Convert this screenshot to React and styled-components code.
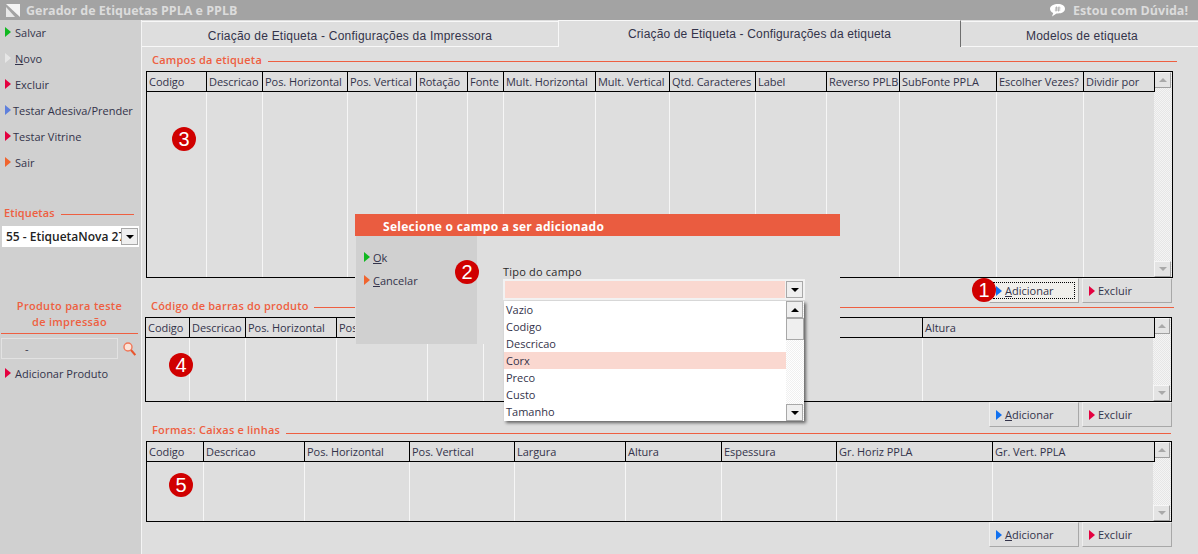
import React from 'react';
import styled, { createGlobalStyle } from 'styled-components';

const FONT = '"Open Sans", "Noto Sans", "Liberation Sans", sans-serif';
const ORANGE = '#ee5f41';
const TEXT = '#33334a';

const GlobalStyle = createGlobalStyle`
  html, body { margin: 0; padding: 0; background: #dedede; }
  body { font-family: ${FONT}; font-size: 11px; color: ${TEXT}; overflow: hidden; }
  * { box-sizing: border-box; }
`;

const ARROWS = {
  green: '#10b820',
  white: '#e6e6e6',
  red: '#e4003f',
  blue: '#5f80dc',
  brightBlue: '#1070f0',
  orange: '#f0642e',
};

const Window = styled.div`
  width: 1198px;
  height: 554px;
  display: flex;
  flex-direction: column;
  position: relative;
  overflow: hidden;
  background: #dedede;
`;

const TitleBar = styled.header`
  height: 20px;
  flex: none;
  display: flex;
  align-items: center;
  padding: 0 10px 0 6px;
  background: #a3a3a3;
  color: #dcdcdc;
  font-weight: 700;
  font-size: 12.5px;
`;

const AppTitle = styled.span`
  margin-left: 6px;
`;

const HelpLink = styled.span`
  margin-left: auto;
  display: flex;
  align-items: center;
  gap: 8px;
`;

const Body = styled.div`
  flex: 1;
  display: flex;
  min-height: 0;
`;

const Sidebar = styled.aside`
  width: 141px;
  flex: none;
  display: flex;
  flex-direction: column;
  padding: 0 0 0 1px;
  background: #d0d0d0;
`;

const Menu = styled.nav`
  display: flex;
  flex-direction: column;
  padding: ${(p) => p.$top ?? 0}px 0 0 4px;
`;

const MenuItem = styled.div`
  height: 26px;
  padding-bottom: 2px;
  display: flex;
  align-items: center;
  gap: ${(p) => p.$gap ?? 4}px;
  white-space: nowrap;
`;

const Arrow = styled.i`
  display: block;
  flex: none;
  width: 0;
  height: 0;
  border-style: solid;
  border-width: 5.5px 0 5.5px 6px;
  border-color: transparent transparent transparent ${(p) => ARROWS[p.$color]};
`;

const Underlined = styled.u`
  text-underline-offset: 1px;
`;

const SideHeading = styled.div`
  margin: 29px 0 0 3px;
  display: flex;
  align-items: center;
  gap: 6px;
  height: 14px;
  color: ${ORANGE};
  font-weight: 600;
  letter-spacing: 0.1px;
  &::after {
    content: '';
    width: 73px;
    height: 1px;
    margin-top: 5px;
    background: ${ORANGE};
  }
`;

const LabelSelect = styled.div`
  margin: 7px 0 0 1px;
  width: 137px;
  height: 21px;
  padding: 2px 1px 2px 4px;
  display: flex;
  align-items: center;
  background: #fff;
  font-size: 12px;
  font-weight: 600;
  color: #222;
  white-space: nowrap;
  overflow: hidden;
`;

const Clip = styled.span`
  flex: 1;
  overflow: hidden;
`;

const DropButton = styled.span`
  width: ${(p) => p.$w ?? 17}px;
  height: ${(p) => p.$h ?? 17}px;
  flex: none;
  display: flex;
  align-items: center;
  justify-content: center;
  background: #efefef;
  border: 1px solid #a8a8a8;
  &::after {
    content: '';
    border-style: solid;
    border-width: ${(p) => (p.$up ? '0 4px 4px' : '4px 4px 0')};
    border-color: ${(p) =>
      p.$up
        ? `transparent transparent ${p.$muted ? '#a9a9a9' : '#000'}`
        : `${p.$muted ? '#a9a9a9' : '#000'} transparent transparent`};
  }
`;

const ProductHeading = styled.div`
  margin: 51px 3px 0 0;
  padding-bottom: 2px;
  height: 36px;
  border-bottom: 1px solid ${ORANGE};
  color: ${ORANGE};
  font-weight: 600;
  letter-spacing: 0.3px;
  line-height: 16px;
  text-align: center;
`;

const ProductRow = styled.div`
  margin-top: 4px;
  display: flex;
  align-items: center;
  gap: 5px;
`;

const ProductInput = styled.div`
  width: 117px;
  height: 21px;
  padding-left: 23px;
  display: flex;
  align-items: center;
  border: 1px solid #e2e2e2;
`;

const Main = styled.main`
  flex: 1;
  min-width: 0;
  display: flex;
  flex-direction: column;
  border-left: 1px solid #f4f4f4;
`;

const Tabs = styled.div`
  height: 27px;
  flex: none;
  display: flex;
`;

const Tab = styled.div`
  width: ${(p) => p.$w}px;
  flex: ${(p) => (p.$grow ? 1 : 'none')};
  display: flex;
  align-items: center;
  justify-content: center;
  padding: ${(p) => (p.$active ? 0 : 3)}px 0 0 ${(p) => (p.$grow ? 5 : 0)}px;
  font-family: "Liberation Sans", Arial, sans-serif;
  font-size: 12px;
  letter-spacing: ${(p) => p.$spacing}px;
  background: #dedede;
  border-top: 1px solid #f8f8f8;
  margin-top: ${(p) => (p.$active ? 0 : 1)}px;
  border-bottom: ${(p) => (p.$active ? 'none' : '1px solid #f8f8f8')};
  border-right: ${(p) => (p.$active ? '1px solid #6e6e6e' : 'none')};
  border-left: ${(p) => (p.$active ? '1px solid #f8f8f8' : 'none')};
`;

const Heading = styled.div`
  height: ${(p) => p.$h}px;
  flex: none;
  padding: 0 ${(p) => p.$right}px 0 ${(p) => p.$left}px;
  display: flex;
  align-items: flex-start;
  gap: ${(p) => p.$gap ?? 6}px;
  white-space: nowrap;
  &::after {
    content: '';
    flex: 1;
    height: 1px;
    margin-top: ${(p) => p.$line}px;
    background: ${ORANGE};
  }
`;

const HeadingText = styled.span`
  margin-top: ${(p) => p.$top}px;
  color: ${ORANGE};
  font-weight: 600;
  letter-spacing: 0.2px;
  line-height: 14px;
`;

const GridBox = styled.div`
  height: ${(p) => p.$h}px;
  width: ${(p) => p.$w}px;
  margin-left: ${(p) => p.$left}px;
  flex: none;
  display: flex;
  border: 1px solid #000;
  overflow: hidden;
`;

const GridBody = styled.div`
  flex: 1;
  display: flex;
  min-width: 0;
`;

const Column = styled.div`
  width: ${(p) => p.$w}px;
  flex: none;
  display: flex;
  flex-direction: column;
  border-right: 1px solid #f6f6f6;
  &:last-child {
    border-right: none;
  }
`;

const HeaderCell = styled.div`
  height: 20px;
  flex: none;
  margin-right: -1px;
  padding-left: 2px;
  display: flex;
  align-items: center;
  border-right: 1px solid #000;
  border-bottom: 1px solid #000;
  letter-spacing: -0.05px;
  white-space: nowrap;
  overflow: hidden;
  background: #dedede;
  position: relative;
`;

const ScrollBar = styled.div`
  width: 18px;
  flex: none;
  display: flex;
  flex-direction: column;
  justify-content: space-between;
  background: repeating-conic-gradient(#e6e6e6 0 25%, #f4f4f4 0 50%) 0 0 / 2px 2px;
`;

const ScrollButton = styled(DropButton)`
  width: 17px;
  height: 16px;
  background: #e4e4e4;
  border: none;
  border-top: 1px solid #f6f6f6;
  border-left: 1px solid #f6f6f6;
  border-right: 1px solid #a0a0a0;
  border-bottom: 1px solid #a0a0a0;
`;

const ButtonRow = styled.div`
  height: 25px;
  flex: none;
  display: flex;
  justify-content: flex-end;
  gap: 3px;
  padding-right: 26px;
`;

const ActionButton = styled.div`
  width: 90px;
  height: 25px;
  padding-left: 6px;
  display: flex;
  align-items: center;
  gap: 3px;
  border-top: 1px solid #efefef;
  border-left: 1px solid #efefef;
  border-right: 1px solid #a8a8a8;
  border-bottom: 1px solid #a8a8a8;
  background: ${(p) => (p.$focus ? '#f0efeb' : '#dedede')};
  position: relative;
  ${(p) =>
    p.$focus &&
    `&::after {
      content: '';
      position: absolute;
      inset: 3px;
      border: 1px dotted #000;
    }`}
`;

const Badge = styled.span`
  position: absolute;
  left: ${(p) => p.$x - 12}px;
  top: ${(p) => p.$y - 12}px;
  width: 24px;
  height: 24px;
  display: flex;
  align-items: center;
  justify-content: center;
  border-radius: 50%;
  background: #d00000;
  color: #fff;
  font-family: "Liberation Sans", Arial, sans-serif;
  font-size: 20px;
  z-index: 5;
`;

const Dialog = styled.section`
  position: absolute;
  left: 355px;
  top: 214px;
  width: 485px;
  height: 130px;
  display: flex;
  flex-direction: column;
  background: #dedede;
  z-index: 3;
`;

const DialogTitle = styled.div`
  height: 22px;
  flex: none;
  padding: 2px 0 0 28px;
  display: flex;
  align-items: center;
  background: #ea5c40;
  color: #fff;
  font-weight: 700;
  font-size: 12px;
  letter-spacing: 0.28px;
`;

const DialogBody = styled.div`
  flex: 1;
  display: flex;
`;

const DialogMenu = styled.div`
  width: 121px;
  margin-left: 1px;
  padding: 12px 0 0 8px;
  display: flex;
  flex-direction: column;
  gap: 5px;
  background: #d0d0d0;
`;

const DialogItem = styled.div`
  height: 18px;
  display: flex;
  align-items: center;
  gap: 3px;
`;

const FieldArea = styled.div`
  margin-left: 26px;
  padding-top: 28px;
  position: relative;
`;

const FieldLabel = styled.div`
  height: 15px;
  line-height: 15px;
  color: #2a2a2a;
  letter-spacing: 0.2px;
`;

const ComboBox = styled.div`
  width: 302px;
  height: 21px;
  padding: 2px;
  display: flex;
  gap: 1px;
  background: #f2f2f2;
`;

const ComboValue = styled.div`
  flex: 1;
  background: #fad8d0;
`;

const DropList = styled.div`
  position: absolute;
  left: 1px;
  top: 65px;
  width: 300px;
  height: 120px;
  display: flex;
  background: #fff;
  box-shadow: 2px 2px 3px rgba(0, 0, 0, 0.55);
`;

const Options = styled.div`
  flex: 1;
  display: flex;
  flex-direction: column;
`;

const Option = styled.div`
  height: 17px;
  padding-left: 2px;
  display: flex;
  align-items: center;
  background: ${(p) => (p.$selected ? '#fad8d0' : 'transparent')};
`;

const ListScroll = styled.div`
  width: 18px;
  flex: none;
  display: flex;
  flex-direction: column;
  background: repeating-conic-gradient(#f0f0f0 0 25%, #fff 0 50%) 0 0 / 2px 2px;
`;

const Thumb = styled.div`
  height: 22px;
  background: #efefef;
  border: 1px solid #a8a8a8;
`;

const BottomButton = styled(DropButton)`
  margin-top: auto;
`;

const fieldColumns = [
  ['Codigo', 60], ['Descricao', 56], ['Pos. Horizontal', 85], ['Pos. Vertical', 69],
  ['Rotação', 51], ['Fonte', 36], ['Mult. Horizontal', 92], ['Mult. Vertical', 74],
  ['Qtd. Caracteres', 86], ['Label', 71], ['Reverso PPLB', 73], ['SubFonte PPLA', 97],
  ['Escolher Vezes?', 87], ['Dividir por', 70],
];

// the two columns behind the dialog show no caption in the picture
const barcodeColumns = [
  ['Codigo', 44], ['Descricao', 56], ['Pos. Horizontal', 91], ['Pos. Vertical', 91],
  ['', 56], ['', 439], ['Altura', 231],
];

const shapeColumns = [
  ['Codigo', 57], ['Descricao', 101], ['Pos. Horizontal', 105], ['Pos. Vertical', 105],
  ['Largura', 111], ['Altura', 96], ['Espessura', 115], ['Gr. Horiz PPLA', 156],
  ['Gr. Vert. PPLA', 161],
];

const fieldTypes = ['Vazio', 'Codigo', 'Descricao', 'Corx', 'Preco', 'Custo', 'Tamanho'];

const DataGrid = ({ columns, h, w, left }) => (
  <GridBox $h={h} $w={w} $left={left}>
    <GridBody>
      {columns.map(([name, width], i) => (
        <Column key={i} $w={width}>
          <HeaderCell>{name}</HeaderCell>
        </Column>
      ))}
    </GridBody>
    <ScrollBar>
      <ScrollButton $up $muted />
      <ScrollButton $muted />
    </ScrollBar>
  </GridBox>
);

const GridButtons = ({ focus }) => (
  <ButtonRow>
    <ActionButton $focus={focus}>
      <Arrow $color="brightBlue" />
      <span><Underlined>A</Underlined>dicionar</span>
    </ActionButton>
    <ActionButton>
      <Arrow $color="red" />
      Excluir
    </ActionButton>
  </ButtonRow>
);

const LogoIcon = () => (
  <svg width="14" height="14" viewBox="0 0 14 14">
    <path d="M0 1h14v13z" fill="#f4f4f4" />
    <path d="M0 4l9 10H0z" fill="#e8e8e8" />
  </svg>
);

const ChatIcon = () => (
  <svg width="15" height="13" viewBox="0 0 15 13">
    <path d="M8 0c4 0 7 1.900 7 4.800S12 9.500 8 9.500H6.500L2 12.500l1.200-3.600C1.200 8.200 0 6.700 0 4.800 0 1.900 4 0 8 0z" fill="#fff" />
    <path d="M6.500 2.500 6 7.500M9 2.500l-.5 5M5 4h5.500M4.800 6h5.500" stroke="#a3a3a3" strokeWidth="0.8" fill="none" />
  </svg>
);

const SearchIcon = () => (
  <svg width="13" height="14" viewBox="0 0 13 14">
    <circle cx="5" cy="5" r="4" fill="#fbe3d8" stroke="#f0785a" strokeWidth="1.400" />
    <path d="M8 8l4.300 5" stroke="#e8562e" strokeWidth="2" />
  </svg>
);

const App = () => (
  <Window>
    <GlobalStyle />
    <TitleBar>
      <LogoIcon />
      <AppTitle>Gerador de Etiquetas PPLA e PPLB</AppTitle>
      <HelpLink>
        <ChatIcon />
        Estou com Dúvida!
      </HelpLink>
    </TitleBar>
    <Body>
      <Sidebar>
        <Menu>
          <MenuItem><Arrow $color="green" />Salvar</MenuItem>
          <MenuItem><Arrow $color="white" /><span><Underlined>N</Underlined>ovo</span></MenuItem>
          <MenuItem><Arrow $color="red" />Excluir</MenuItem>
          <MenuItem $gap={2}><Arrow $color="blue" />Testar Adesiva/Prender</MenuItem>
          <MenuItem $gap={2}><Arrow $color="red" />Testar Vitrine</MenuItem>
          <MenuItem><Arrow $color="orange" />Sair</MenuItem>
        </Menu>
        <SideHeading>Etiquetas</SideHeading>
        <LabelSelect>
          <Clip>55 - EtiquetaNova 27</Clip>
          <DropButton />
        </LabelSelect>
        <ProductHeading>
          Produto para teste
          <br />
          de impressão
        </ProductHeading>
        <ProductRow>
          <ProductInput>-</ProductInput>
          <SearchIcon />
        </ProductRow>
        <Menu $top={2}>
          <MenuItem><Arrow $color="red" />Adicionar Produto</MenuItem>
        </Menu>
      </Sidebar>
      <Main>
        <Tabs>
          <Tab $w={416} $spacing={0.22}>Criação de Etiqueta - Configurações da Impressora</Tab>
          <Tab $w={403} $spacing={0.15} $active>Criação de Etiqueta - Configurações da etiqueta</Tab>
          <Tab $grow $spacing={0.2}>Modelos de etiqueta</Tab>
        </Tabs>
        <Heading $h={24} $left={10} $right={21} $line={14}>
          <HeadingText $top={6}>Campos da etiqueta</HeadingText>
        </Heading>
        <DataGrid columns={fieldColumns} h={207} w={1027} left={4} />
        <GridButtons focus />
        <Heading $h={14} $left={9} $right={24} $line={4} $gap={5}>
          <HeadingText $top={-4}>Código de barras do produto</HeadingText>
        </Heading>
        <DataGrid columns={barcodeColumns} h={85} w={1027} left={3} />
        <GridButtons />
        <Heading $h={14} $left={10} $right={27} $line={6}>
          <HeadingText $top={-4}>Formas: Caixas e linhas</HeadingText>
        </Heading>
        <DataGrid columns={shapeColumns} h={81} w={1026} left={4} />
        <GridButtons />
      </Main>
    </Body>

    <Dialog>
      <DialogTitle>Selecione o campo a ser adicionado</DialogTitle>
      <DialogBody>
        <DialogMenu>
          <DialogItem><Arrow $color="green" /><span><Underlined>O</Underlined>k</span></DialogItem>
          <DialogItem><Arrow $color="orange" /><span><Underlined>C</Underlined>ancelar</span></DialogItem>
        </DialogMenu>
        <FieldArea>
          <FieldLabel>Tipo do campo</FieldLabel>
          <ComboBox>
            <ComboValue />
            <DropButton />
          </ComboBox>
          <DropList>
            <Options>
              {fieldTypes.map((type) => (
                <Option key={type} $selected={type === 'Corx'}>{type}</Option>
              ))}
            </Options>
            <ListScroll>
              <DropButton $up $w={17} $h={17} />
              <Thumb />
              <BottomButton $w={17} $h={17} />
            </ListScroll>
          </DropList>
        </FieldArea>
      </DialogBody>
    </Dialog>

    <Badge $x={984} $y={290}>1</Badge>
    <Badge $x={467} $y={272}>2</Badge>
    <Badge $x={184} $y={139}>3</Badge>
    <Badge $x={181} $y={365}>4</Badge>
    <Badge $x={181} $y={485}>5</Badge>
  </Window>
);

export default App;
